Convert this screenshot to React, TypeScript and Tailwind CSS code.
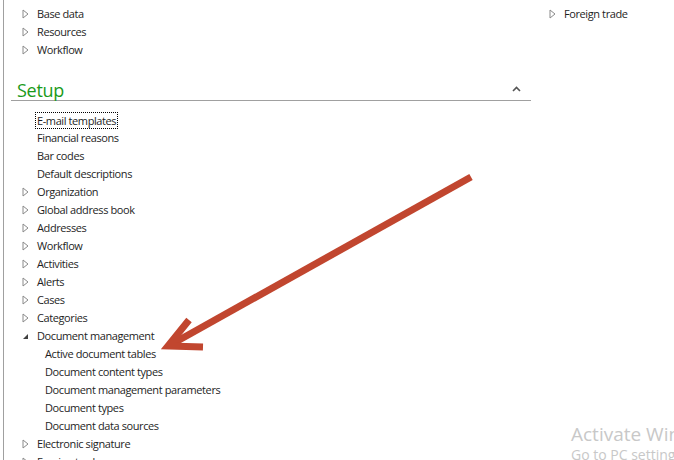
import React from "react";

type Item = { label: string; icon?: "closed" | "open"; indent?: boolean; focus?: boolean };

const topItems: Item[] = [
  { label: "Base data", icon: "closed" },
  { label: "Resources", icon: "closed" },
  { label: "Workflow", icon: "closed" },
];

const setupItems: Item[] = [
  { label: "E-mail templates", focus: true },
  { label: "Financial reasons" },
  { label: "Bar codes" },
  { label: "Default descriptions" },
  { label: "Organization", icon: "closed" },
  { label: "Global address book", icon: "closed" },
  { label: "Addresses", icon: "closed" },
  { label: "Workflow", icon: "closed" },
  { label: "Activities", icon: "closed" },
  { label: "Alerts", icon: "closed" },
  { label: "Cases", icon: "closed" },
  { label: "Categories", icon: "closed" },
  { label: "Document management", icon: "open" },
  { label: "Active document tables", indent: true },
  { label: "Document content types", indent: true },
  { label: "Document management parameters", indent: true },
  { label: "Document types", indent: true },
  { label: "Document data sources", indent: true },
  { label: "Electronic signature", icon: "closed" },
  { label: "Foreign trade", icon: "closed" },
];

const Triangle = ({ open }: { open?: boolean }) =>
  open ? (
    <svg width="7" height="7" viewBox="0 0 7 7">
      <polygon points="6,1 6,6 1,6" fill="#404040" />
    </svg>
  ) : (
    <svg width="7" height="10" viewBox="0 0 7 10">
      <polygon points="1,1 6,5 1,9" fill="none" stroke="#8a8a8a" strokeWidth="1" />
    </svg>
  );

const Row = ({ item }: { item: Item }) => (
  <li className="flex items-center h-[18px] pl-[11px]">
    <span className="w-[15px] flex items-center">
      {item.icon && <Triangle open={item.icon === "open"} />}
    </span>
    <span
      className={`${item.indent ? "ml-[8px]" : ""} ${
        item.focus ? "border border-dotted border-black px-[1px] -ml-[2px] leading-[15px]" : ""
      } text-[#1e1e1e] whitespace-nowrap`}
    >
      {item.label}
    </span>
  </li>
);

export default function App() {
  return (
    <div className="relative w-[674px] h-[460px] overflow-hidden bg-white font-['Segoe_UI','Open_Sans',sans-serif] text-[11px] tracking-[-0.4px]">
      <div className="ml-[3px] h-full border-l border-[#a0a0a0] flex">
        <div className="w-[527px] pl-[7px]">
          <ul className="pt-[5px]">
            {topItems.map((it) => (
              <Row key={it.label} item={it} />
            ))}
          </ul>
          <div className="mt-[21px] h-[21px] flex items-center justify-between border-b border-[#a0a0a0]">
            <span className="pl-[6px] text-[18px] leading-[20px] text-[#1a9a1a] tracking-[-0.3px]">
              Setup
            </span>
            <svg width="9" height="6" viewBox="0 0 9 6" className="mr-[10px] mb-[3px]">
              <polyline points="1,5 4.5,1.5 8,5" fill="none" stroke="#555" strokeWidth="1.6" />
            </svg>
          </div>
          <ul className="mt-[10px]">
            {setupItems.map((it, i) => (
              <Row key={i} item={it} />
            ))}
          </ul>
        </div>
        <div className="pl-[7px]">
          <ul className="pt-[5px]">
            <Row item={{ label: "Foreign trade", icon: "closed" }} />
          </ul>
        </div>
      </div>

      <svg className="absolute inset-0 pointer-events-none" width="674" height="460">
        <line x1="471" y1="177" x2="172" y2="344" stroke="#c1462f" strokeWidth="7" />
        <polyline
          points="189,320 168,346 203,347"
          fill="none"
          stroke="#c1462f"
          strokeWidth="7"
          strokeLinejoin="miter"
        />
      </svg>

      <div className="absolute left-[571px] top-[422px] whitespace-nowrap text-[#c8c8c8] tracking-normal">
        <div className="text-[19px] leading-[24px]">Activate Windows</div>
        <div className="text-[14px] leading-[18px]">Go to PC settings to activate Windows.</div>
      </div>
    </div>
  );
}
